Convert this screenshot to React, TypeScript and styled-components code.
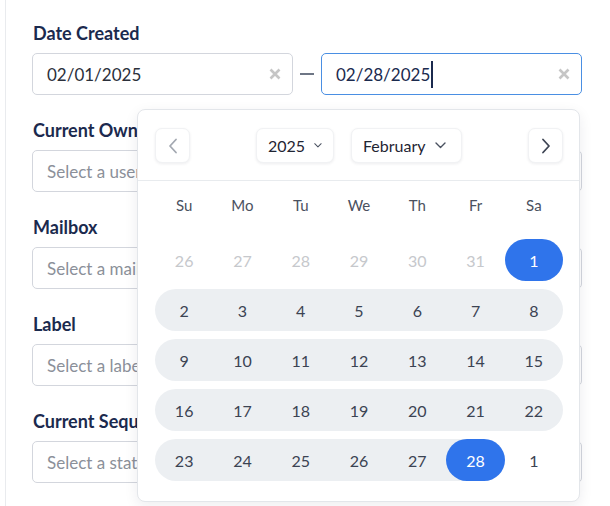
import React from 'react';
import styled, { createGlobalStyle } from 'styled-components';

const GlobalStyle = createGlobalStyle`
  * {
    box-sizing: border-box;
  }
  body {
    margin: 0;
    background: #ffffff;
    font-family: Lato, 'Liberation Sans', sans-serif;
  }
`;

const Panel = styled.div`
  min-height: 100vh;
  margin-left: 5px;
  border-left: 1px solid #e9ebee;
  padding: 21px 28px 0 26px;
  display: flex;
  flex-direction: column;
  gap: 23px;
`;

const Field = styled.div`
  display: flex;
  flex-direction: column;
  gap: 8px;
`;

const Label = styled.div`
  font-size: 18px;
  line-height: 24px;
  font-weight: 700;
  color: #1b2a4e;
  padding-left: 1px;
`;

const Box = styled.div<{ $focused?: boolean; $grow?: boolean }>`
  height: 42px;
  flex: ${(p) => (p.$grow ? '1 1 0' : 'none')};
  display: flex;
  align-items: center;
  padding: 0 11px 0 14px;
  border: 1px solid ${(p) => (p.$focused ? '#4a8fe3' : '#d3d6dd')};
  border-radius: 5px;
  background: #fff;
`;

const Value = styled.span<{ $focused?: boolean }>`
  flex: 1;
  font-size: 17px;
  color: ${(p) => (p.$focused ? '#1b2a4e' : '#2b303b')};
  display: flex;
  align-items: center;
`;

const Caret = styled.span`
  display: inline-block;
  width: 2px;
  height: 27px;
  background: #1b2a4e;
  margin-left: 1px;
`;

const Placeholder = styled.span`
  font-size: 17px;
  color: #8b9099;
`;

const RangeRow = styled.div`
  position: relative;
  display: flex;
  align-items: center;
  gap: 7px;
`;

const Dash = styled.span`
  width: 14px;
  height: 1.5px;
  background: #6e7685;
`;

const Popover = styled.div`
  position: absolute;
  top: calc(100% + 14px);
  left: 105px;
  width: 443px;
  height: 393px;
  background: #fff;
  border: 1px solid #e3e6ea;
  border-radius: 8px;
  box-shadow: 0 4px 14px rgba(20, 30, 50, 0.08);
  z-index: 2;
`;

const Header = styled.div`
  display: flex;
  align-items: center;
  justify-content: space-between;
  padding: 18px 16px 17px 17px;
  border-bottom: 1px solid #e8ebee;
`;

const NavButton = styled.button<{ $muted?: boolean }>`
  width: 35px;
  height: 35px;
  display: flex;
  align-items: center;
  justify-content: center;
  padding: 0;
  background: #fff;
  border: 1px solid #f1f2f4;
  border-radius: 7px;
  box-shadow: 0 1px 3px rgba(20, 30, 50, 0.08);
  color: ${(p) => (p.$muted ? '#a3a8b1' : '#3d4453')};
`;

const Selects = styled.div`
  display: flex;
  gap: 17px;
`;

const SelectBox = styled.div<{ $w: number }>`
  width: ${(p) => p.$w}px;
  height: 35px;
  display: flex;
  align-items: center;
  gap: 9px;
  padding: 0 11px;
  background: #fff;
  border: 1px solid #f1f2f4;
  border-radius: 7px;
  box-shadow: 0 1px 3px rgba(20, 30, 50, 0.08);
  font-size: 16px;
  color: #1f2533;
`;

const Grid = styled.div`
  padding: 0 16px 0 17px;
  display: flex;
  flex-direction: column;
  gap: 8px;
`;

const WeekRow = styled.div<{ $head?: boolean }>`
  display: grid;
  grid-template-columns: repeat(7, 1fr);
  height: ${(p) => (p.$head ? '24px' : '42px')};
  margin: ${(p) => (p.$head ? '12px 0 14px' : '0')};
`;

const DayName = styled.div`
  display: flex;
  align-items: center;
  justify-content: center;
  font-size: 15px;
  color: #4a5160;
`;

type Kind = 'out' | 'plain' | 'range' | 'start' | 'end';

const Cell = styled.div<{ $kind: Kind; $first: boolean; $last: boolean }>`
  display: flex;
  align-items: stretch;
  background: ${(p) =>
    p.$kind === 'range'
      ? '#eceff2'
      : p.$kind === 'end'
      ? 'linear-gradient(to right, #eceff2 50%, transparent 50%)'
      : 'transparent'};
  border-radius: ${(p) =>
    `${p.$first ? '21px' : '0'} ${p.$last ? '21px' : '0'} ${p.$last ? '21px' : '0'} ${p.$first ? '21px' : '0'}`};
`;

const DayNum = styled.div<{ $kind: Kind }>`
  flex: 1;
  display: flex;
  align-items: center;
  justify-content: center;
  border-radius: 21px;
  font-size: 16px;
  background: ${(p) => (p.$kind === 'start' || p.$kind === 'end' ? '#2f74eb' : 'transparent')};
  color: ${(p) =>
    p.$kind === 'start' || p.$kind === 'end' ? '#ffffff' : p.$kind === 'out' ? '#c6c8cc' : '#3b4353'};
`;

const ClearIcon = () => (
  <svg width="12" height="12" viewBox="0 0 12 12">
    <path d="M1.5 1.5 L10.5 10.5 M10.5 1.5 L1.5 10.5" stroke="#c6c6c6" strokeWidth="2.6" strokeLinecap="butt" />
  </svg>
);

const Chevron = ({ dir }: { dir: 'left' | 'right' }) => (
  <svg width="10" height="16" viewBox="0 0 10 16">
    <path
      d={dir === 'left' ? 'M8 1.5 L2 8 L8 14.5' : 'M2 1.5 L8 8 L2 14.5'}
      fill="none"
      stroke="currentColor"
      strokeWidth="1.8"
      strokeLinecap="round"
      strokeLinejoin="round"
    />
  </svg>
);

const Down = () => (
  <svg width="11" height="7" viewBox="0 0 11 7">
    <path d="M1 1 L5.5 5.5 L10 1" fill="none" stroke="#4a5160" strokeWidth="1.4" strokeLinecap="round" strokeLinejoin="round" />
  </svg>
);

const dayNames = ['Su', 'Mo', 'Tu', 'We', 'Th', 'Fr', 'Sa'];

const weeks: { n: number; k: Kind }[][] = [
  [26, 27, 28, 29, 30, 31].map((n) => ({ n, k: 'out' as Kind })).concat([{ n: 1, k: 'start' }]),
  [2, 3, 4, 5, 6, 7, 8].map((n) => ({ n, k: 'range' as Kind })),
  [9, 10, 11, 12, 13, 14, 15].map((n) => ({ n, k: 'range' as Kind })),
  [16, 17, 18, 19, 20, 21, 22].map((n) => ({ n, k: 'range' as Kind })),
  [23, 24, 25, 26, 27].map((n) => ({ n, k: 'range' as Kind })).concat([
    { n: 28, k: 'end' },
    { n: 1, k: 'plain' },
  ]),
];

const fields = [
  { label: 'Current Owner', placeholder: 'Select a user' },
  { label: 'Mailbox', placeholder: 'Select a mailbox' },
  { label: 'Label', placeholder: 'Select a label' },
  { label: 'Current Sequence', placeholder: 'Select a status' },
];

export default function App() {
  return (
    <>
      <GlobalStyle />
      <Panel>
        <Field>
          <Label>Date Created</Label>
          <RangeRow>
            <Box $grow>
              <Value>02/01/2025</Value>
              <ClearIcon />
            </Box>
            <Dash />
            <Box $grow $focused>
              <Value $focused>
                02/28/2025
                <Caret />
              </Value>
              <ClearIcon />
            </Box>
            <Popover>
              <Header>
                <NavButton $muted>
                  <Chevron dir="left" />
                </NavButton>
                <Selects>
                  <SelectBox $w={78}>
                    2025
                    <Down />
                  </SelectBox>
                  <SelectBox $w={111}>
                    February
                    <Down />
                  </SelectBox>
                </Selects>
                <NavButton>
                  <Chevron dir="right" />
                </NavButton>
              </Header>
              <Grid>
                <WeekRow $head>
                  {dayNames.map((d) => (
                    <DayName key={d}>{d}</DayName>
                  ))}
                </WeekRow>
                {weeks.map((week, wi) => (
                  <WeekRow key={wi}>
                    {week.map((d, di) => {
                      const prev = week[di - 1];
                      const next = week[di + 1];
                      const inBand = d.k === 'range';
                      const first = inBand && (!prev || prev.k !== 'range');
                      const last = inBand && (!next || (next.k !== 'range' && next.k !== 'end'));
                      return (
                        <Cell key={di} $kind={d.k} $first={first} $last={last}>
                          <DayNum $kind={d.k}>{d.n}</DayNum>
                        </Cell>
                      );
                    })}
                  </WeekRow>
                ))}
              </Grid>
            </Popover>
          </RangeRow>
        </Field>
        {fields.map((f) => (
          <Field key={f.label}>
            <Label>{f.label}</Label>
            <Box>
              <Placeholder>{f.placeholder}</Placeholder>
            </Box>
          </Field>
        ))}
      </Panel>
    </>
  );
}
